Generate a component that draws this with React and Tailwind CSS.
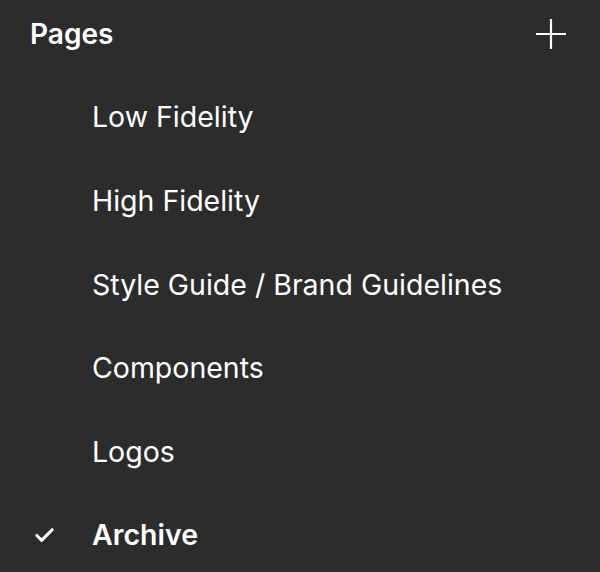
import { Check } from "lucide-react";

const pages = [
  "Low Fidelity",
  "High Fidelity",
  "Style Guide / Brand Guidelines",
  "Components",
  "Logos",
];

function App() {
  return (
    <div
      className="w-[600px] h-[572px] overflow-hidden bg-[#2c2c2c] text-white"
      style={{ fontFamily: "Inter, 'Noto Sans', sans-serif" }}
    >
      {/* Header */}
      <div className="flex items-center justify-between h-[68px] pl-[30px] pr-[34px]">
        <h1 className="text-[28px] font-semibold">Pages</h1>
        <svg width="30" height="32" viewBox="0 0 30 32" className="text-white">
          <path d="M15 1v30M0 16h30" stroke="currentColor" strokeWidth="2.2" />
        </svg>
      </div>

      <div className="mt-[8px] flex flex-col">
        {pages.map((p) => (
          <div key={p} className="h-[83.6px] flex items-center pl-[92px]">
            <span className="text-[28.5px] font-normal">{p}</span>
          </div>
        ))}
        <div className="h-[83.6px] flex items-center">
          <div className="w-[92px] flex pl-[33px]">
            <Check size={23} strokeWidth={3.2} />
          </div>
          <span className="text-[28.5px] font-semibold">Archive</span>
        </div>
      </div>
    </div>
  );
}

export default App;
